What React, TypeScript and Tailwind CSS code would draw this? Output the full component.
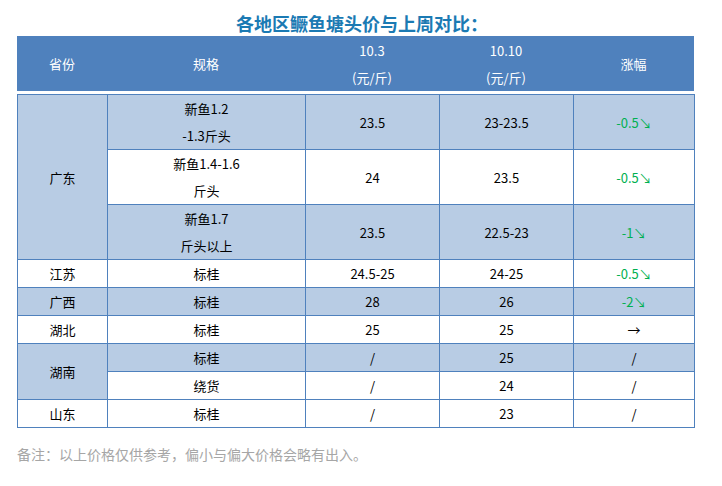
const rows = [
  { prov: "广东", span: 3, spec: ["新鱼1.2", "-1.3斤头"], a: "23.5", b: "23-23.5", c: "-0.5↘", up: true, blue: true },
  { spec: ["新鱼1.4-1.6", "斤头"], a: "24", b: "23.5", c: "-0.5↘", up: true, blue: false },
  { spec: ["新鱼1.7", "斤头以上"], a: "23.5", b: "22.5-23", c: "-1↘", up: true, blue: true },
  { prov: "江苏", span: 1, spec: ["标桂"], a: "24.5-25", b: "24-25", c: "-0.5↘", up: true, blue: false },
  { prov: "广西", span: 1, spec: ["标桂"], a: "28", b: "26", c: "-2↘", up: true, blue: true },
  { prov: "湖北", span: 1, spec: ["标桂"], a: "25", b: "25", c: "→", up: false, blue: false },
  { prov: "湖南", span: 2, spec: ["标桂"], a: "/", b: "25", c: "/", up: false, blue: true },
  { spec: ["绕货"], a: "/", b: "24", c: "/", up: false, blue: false },
  { prov: "山东", span: 1, spec: ["标桂"], a: "/", b: "23", c: "/", up: false, blue: false },
];

const cell = "border border-[#4f81bd] p-0 text-center align-middle";

export default function App() {
  return (
    <div className="w-[722px] h-[486px] bg-white font-['Noto_Sans_CJK_SC',sans-serif] text-[13px] text-black">
      <h1 className="pt-[11px] h-[36px] text-center text-[18px] leading-[24px] font-bold text-[#1b7ab3] pl-[2px]">
        各地区鳜鱼塘头价与上周对比：
      </h1>

      <div className="ml-[17px] w-[677px]">
        {/* 表头 */}
        <div className="grid grid-cols-[90px_198px_134px_134px_121px] h-[55px] bg-[#4f81bd] text-white leading-[27px]">
          <div className="flex items-center justify-center">省份</div>
          <div className="flex items-center justify-center">规格</div>
          <div className="flex flex-col items-center justify-center pt-[1px]">
            <span>10.3</span>
            <span>(元/斤)</span>
          </div>
          <div className="flex flex-col items-center justify-center pt-[1px]">
            <span>10.10</span>
            <span>(元/斤)</span>
          </div>
          <div className="flex items-center justify-center">涨幅</div>
        </div>

        {/* 数据 */}
        <table className="mt-[3px] w-[677px] table-fixed border-collapse leading-[27px]">
          <colgroup>
            <col className="w-[90px]" />
            <col className="w-[198px]" />
            <col className="w-[134px]" />
            <col className="w-[134px]" />
            <col className="w-[121px]" />
          </colgroup>
          <tbody>
            {rows.map((r, i) => (
              <tr key={i} className={r.blue ? "bg-[#b8cce4]" : "bg-white"}>
                {r.prov && (
                  <td rowSpan={r.span} className={`${cell} ${r.blue ? "bg-[#b8cce4]" : "bg-white"}`}>
                    {r.prov}
                  </td>
                )}
                <td className={cell}>
                  {r.spec.map((s, j) => (
                    <div key={j}>{s}</div>
                  ))}
                </td>
                <td className={cell}>{r.a}</td>
                <td className={cell}>{r.b}</td>
                <td className={`${cell} ${r.up ? "text-[#00b050]" : "text-black"}`}>{r.c}</td>
              </tr>
            ))}
          </tbody>
        </table>

        <p className="mt-[16px] text-[14px] leading-[20px] text-[#a6a6a6]">
          备注：以上价格仅供参考，偏小与偏大价格会略有出入。
        </p>
      </div>
    </div>
  );
}
